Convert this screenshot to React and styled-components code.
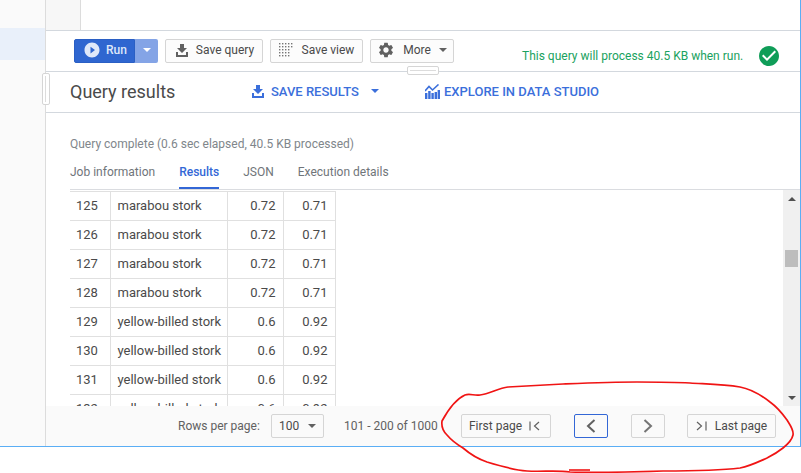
import React from "react";
import styled, { createGlobalStyle } from "styled-components";
import { MdPlayCircleFilled, MdSettings, MdCheckCircle } from "react-icons/md";

const rows = [
  { id: 125, name: "marabou stork", a: "0.72", b: "0.71" },
  { id: 126, name: "marabou stork", a: "0.72", b: "0.71" },
  { id: 127, name: "marabou stork", a: "0.72", b: "0.71" },
  { id: 128, name: "marabou stork", a: "0.72", b: "0.71" },
  { id: 129, name: "yellow-billed stork", a: "0.6", b: "0.92" },
  { id: 130, name: "yellow-billed stork", a: "0.6", b: "0.92" },
  { id: 131, name: "yellow-billed stork", a: "0.6", b: "0.92" },
  { id: 132, name: "yellow-billed stork", a: "0.6", b: "0.92" },
];

const tabs = ["Job information", "Results", "JSON", "Execution details"];

const App = () => {
  return (
    <Page>
      <GlobalStyle />
      <Frame>
        <Sidebar>
          <SidebarHighlight />
        </Sidebar>
        <Main>
          <EditorArea>
            <Gutter />
          </EditorArea>
          <Toolbar>
            <RunGroup>
              <RunButton>
                <MdPlayCircleFilled size={18} />
                Run
              </RunButton>
              <RunCaret>
                <Caret $color="#fff" />
              </RunCaret>
            </RunGroup>
            <ToolButton $width={98} $shift={2}>
              <SaveIcon color="#616161" />
              Save query
            </ToolButton>
            <ToolButton $width={93}>
              <DotsIcon />
              Save view
            </ToolButton>
            <ToolButton $width={84}>
              <MdSettings size={18} color="#616161" />
              More
              <Caret $color="#616161" />
            </ToolButton>
            <Validator>
              This query will process 40.5 KB when run.
              <MdCheckCircle size={24} color="#0f9d58" />
            </Validator>
            <HorizontalHandle />
          </Toolbar>
          <ResultsHeader>
            <VerticalHandle />
            <ResultsTitle>Query results</ResultsTitle>
            <HeaderAction $left={52} $gap={7}>
              <SaveIcon color="#3b6fdb" />
              SAVE RESULTS
              <Caret $color="#3b6fdb" $gap={5} />
            </HeaderAction>
            <HeaderAction $left={46} $gap={4}>
              <ExploreIcon />
              EXPLORE IN DATA STUDIO
            </HeaderAction>
          </ResultsHeader>
          <Summary>Query complete (0.6 sec elapsed, 40.5 KB processed)</Summary>
          <TabBar>
            {tabs.map((tab) => (
              <Tab key={tab} $active={tab === "Results"}>
                {tab}
              </Tab>
            ))}
          </TabBar>
          <TableArea>
            <TableClip>
              <ResultTable>
                <tbody>
                  {rows.map((row) => (
                    <tr key={row.id}>
                      <IdCell>{row.id}</IdCell>
                      <NameCell>{row.name}</NameCell>
                      <NumCell $width={56}>{row.a}</NumCell>
                      <NumCell $width={52}>{row.b}</NumCell>
                    </tr>
                  ))}
                </tbody>
              </ResultTable>
            </TableClip>
            <Scrollbar>
              <ScrollArrow $up />
              <ScrollThumb />
              <ScrollArrow />
            </Scrollbar>
          </TableArea>
          <Footer>
            <FooterLabel>Rows per page:</FooterLabel>
            <PageSize>
              100
              <Caret $color="#616161" />
            </PageSize>
            <PageCount>101 - 200 of 1000</PageCount>
            <PagerButton $width={90} $gap={7} $trim={3}>
              First page
              <EdgeIcon $flip />
            </PagerButton>
            <PagerButton $width={34} $gap={0} $focus $left={23}>
              <ChevronIcon $left $color="#616161" />
            </PagerButton>
            <PagerButton $width={34} $gap={0} $left={23}>
              <ChevronIcon $color="#757575" />
            </PagerButton>
            <PagerButton $width={89} $gap={8} $left={22}>
              <EdgeIcon />
              Last page
            </PagerButton>
          </Footer>
        </Main>
      </Frame>
      <Scribble viewBox="0 0 801 473">
        <path
          d="M508 387 C498 388 490 394 480 395 C474 396 470 393 465 395 C456 399 448 410 442 421 C441 428 444 432 447 435 C452 441 458 445 463 448 C470 454 478 459 487 462 C500 466 514 470 527 471 C542 472 556 470 570 472 C600 473 632 472 663 471 C690 471 716 471 740 468 C750 466 758 462 767 458 C773 455 778 452 783 448 C788 444 792 440 793 435 C794 430 790 425 787 420 C782 413 777 407 770 402 C761 395 751 389 740 387 C723 384 707 384 690 383 C672 382 654 382 637 382 C612 382 588 383 563 384 C544 385 526 386 508 387 Z"
          fill="none"
          stroke="#f01414"
          strokeWidth="1.7"
        />
        <path d="M569 470 L590 470" stroke="#f01414" strokeWidth="1.6" />
      </Scribble>
    </Page>
  );
};

const SaveIcon = ({ color }) => (
  <svg width="12" height="13" viewBox="0 0 12 13" fill={color}>
    <path d="M4 0 H8 V4 H11 L6 9 L1 4 H4 Z" />
    <path d="M0 8 H2 V11 H10 V8 H12 V13 H0 Z" />
  </svg>
);

const DotsIcon = () => (
  <svg width="15" height="15" viewBox="0 0 15 15" fill="#757575">
    {[0, 3, 6, 9, 12].map((y) =>
      [0, 3, 6, 9, 12].map((x) => {
        if (y > 3 && x === 12) return null;
        return <rect key={`${x}-${y}`} x={x} y={y} width="1.4" height="1.4" />;
      })
    )}
  </svg>
);

const ExploreIcon = () => (
  <svg width="15" height="15" viewBox="0 0 15 15" fill="#3b6fdb">
    <rect x="0" y="9" width="2.4" height="6" />
    <rect x="3.2" y="7" width="2.4" height="8" />
    <rect x="6.4" y="9" width="2.4" height="6" />
    <rect x="9.6" y="8" width="2.4" height="7" />
    <rect x="12.6" y="6" width="2.4" height="9" />
    <path d="M0 7 L4 2.5 L7.5 6 L13.5 0.5" fill="none" stroke="#3b6fdb" strokeWidth="1.6" />
  </svg>
);

const EdgeIcon = ({ $flip }) => (
  <svg width="11" height="10" viewBox="0 0 11 10" fill="none" stroke="#616161" strokeWidth="1.2">
    {$flip ? (
      <>
        <path d="M1 0.5 V9.5" />
        <path d="M10 1 L5.5 5 L10 9" />
      </>
    ) : (
      <>
        <path d="M10 0.5 V9.5" />
        <path d="M1 1 L5.5 5 L1 9" />
      </>
    )}
  </svg>
);

const ChevronIcon = ({ $left, $color }) => (
  <svg width="10" height="14" viewBox="0 0 10 14" fill="none" stroke={$color} strokeWidth="2">
    <path d={$left ? "M8.5 1 L2 7 L8.5 13" : "M1.5 1 L8 7 L1.5 13"} />
  </svg>
);

const GlobalStyle = createGlobalStyle`
  html, body {
    margin: 0;
    padding: 0;
    background: #fff;
  }
  body {
    font-family: Roboto, "Liberation Sans", sans-serif;
    color: #3c4043;
  }
`;

const Page = styled.div`
  position: relative;
  width: 801px;
  height: 473px;
  overflow: hidden;
  background: #fff;
`;

const Frame = styled.div`
  display: flex;
  width: 801px;
  height: 447px;
  box-sizing: border-box;
  border-right: 1px solid #5aaef5;
  border-bottom: 1px solid #5aaef5;
`;

const Sidebar = styled.div`
  width: 45px;
  flex: none;
  padding-top: 28px;
  background: #fafafa;
  border-right: 1px solid #dcdcdc;
`;

const SidebarHighlight = styled.div`
  height: 32px;
  background: #e9f0fa;
`;

const Main = styled.div`
  flex: 1;
  min-width: 0;
  display: flex;
  flex-direction: column;
`;

const EditorArea = styled.div`
  height: 31px;
  flex: none;
  box-sizing: border-box;
  background: #fff;
  border-bottom: 1px solid #d3d8de;
`;

const Gutter = styled.div`
  width: 35px;
  height: 100%;
  box-sizing: border-box;
  background: #f7f7f7;
  border-right: 1px solid #dcdcdc;
`;

const Toolbar = styled.div`
  position: relative;
  height: 41px;
  flex: none;
  display: flex;
  align-items: center;
  padding-left: 28px;
  box-sizing: border-box;
  border-bottom: 1px solid #d3d8de;
`;

const RunGroup = styled.div`
  display: flex;
  height: 24px;
  margin-right: 7px;
`;

const RunButton = styled.div`
  width: 61px;
  display: flex;
  align-items: center;
  gap: 5px;
  padding: 0 0 2px 8px;
  box-sizing: border-box;
  background: #2f66d0;
  border: 1px solid #2a5fc4;
  border-radius: 2px 0 0 2px;
  color: #dfe8f9;
  font-size: 12px;
  font-weight: 500;
`;

const RunCaret = styled.div`
  width: 23px;
  display: flex;
  align-items: center;
  justify-content: center;
  padding-bottom: 2px;
  box-sizing: border-box;
  background: #84a4e6;
  border-radius: 0 2px 2px 0;
`;

const Caret = styled.span`
  display: inline-block;
  width: 0;
  height: 0;
  margin-left: ${(p) => p.$gap || 0}px;
  border-left: 4px solid transparent;
  border-right: 4px solid transparent;
  border-top: 4px solid ${(p) => p.$color};
`;

const ToolButton = styled.div`
  width: ${(p) => p.$width}px;
  height: 24px;
  display: flex;
  align-items: center;
  justify-content: center;
  gap: 8px;
  margin-right: 7px;
  padding: 0 0 2px ${(p) => p.$shift || 0}px;
  box-sizing: border-box;
  background: #fcfcfc;
  border: 1px solid #d5d5d5;
  border-radius: 2px;
  color: #4a4a4a;
  font-size: 12px;
`;

const Validator = styled.div`
  display: flex;
  align-items: center;
  gap: 14px;
  margin-left: 61px;
  padding-top: 10px;
  color: #1aa260;
  font-size: 12px;
  white-space: nowrap;
`;

const HorizontalHandle = styled.div`
  position: absolute;
  left: 361px;
  bottom: -4px;
  width: 32px;
  height: 9px;
  box-sizing: border-box;
  background: #fff;
  border: 1px solid #d5d5d5;
  border-radius: 2px;
  &::after {
    content: "";
    display: block;
    height: 1px;
    margin: 3px 2px 0;
    background: #dcdcdc;
  }
`;

const ResultsHeader = styled.div`
  position: relative;
  height: 41px;
  flex: none;
  display: flex;
  align-items: center;
  padding: 0 0 2px 24px;
  box-sizing: border-box;
  border-bottom: 1px solid #d3d8de;
`;

const VerticalHandle = styled.div`
  position: absolute;
  left: -4px;
  top: 1px;
  width: 8px;
  height: 32px;
  box-sizing: border-box;
  background: #fff;
  border: 1px solid #d5d5d5;
  border-radius: 2px;
  &::after {
    content: "";
    display: block;
    width: 1px;
    height: 26px;
    margin: 2px 0 0 2px;
    background: #dcdcdc;
  }
`;

const ResultsTitle = styled.div`
  width: 130px;
  font-size: 18px;
  color: #4a4a4a;
`;

const HeaderAction = styled.div`
  display: flex;
  align-items: center;
  gap: ${(p) => p.$gap}px;
  margin-left: ${(p) => p.$left}px;
  color: #3b6fdb;
  font-size: 13px;
  font-weight: 500;
  white-space: nowrap;
`;

const Summary = styled.div`
  height: 47px;
  flex: none;
  box-sizing: border-box;
  padding: 24px 0 0 24px;
  color: #80868b;
  font-size: 12px;
`;

const TabBar = styled.div`
  height: 30px;
  flex: none;
  display: flex;
  gap: 24px;
  margin-left: 24px;
  box-sizing: border-box;
  border-bottom: 1px solid #dadce0;
`;

const Tab = styled.div`
  height: 29px;
  box-sizing: border-box;
  padding-top: 5px;
  color: ${(p) => (p.$active ? "#3367d6" : "#70757a")};
  border-bottom: 2px solid ${(p) => (p.$active ? "#3367d6" : "transparent")};
  font-size: 12px;
  font-weight: ${(p) => (p.$active ? 500 : 400)};
`;

const TableArea = styled.div`
  flex: 1;
  min-height: 0;
  display: flex;
`;

const TableClip = styled.div`
  flex: 1;
  min-width: 0;
  overflow: hidden;
  padding: 1px 0 0 24px;
`;

const ResultTable = styled.table`
  border-collapse: collapse;
  table-layout: fixed;
  width: 265px;
  font-size: 13px;
  color: #4a4a4a;
  border-top: 1px solid #e0e0e0;
`;

const Cell = styled.td`
  height: 29px;
  padding: 0 6px 2px;
  box-sizing: border-box;
  border-bottom: 1px solid #e0e0e0;
  white-space: nowrap;
`;

const IdCell = styled(Cell)`
  width: 40px;
`;

const NameCell = styled(Cell)`
  width: 117px;
  padding-left: 7px;
  border-left: 1px solid #e0e0e0;
`;

const NumCell = styled(Cell)`
  width: ${(p) => p.$width}px;
  padding-right: 7px;
  text-align: right;
  border-left: 1px solid #e0e0e0;
  &:last-child {
    border-right: 1px solid #e0e0e0;
  }
`;

const Scrollbar = styled.div`
  width: 17px;
  flex: none;
  display: flex;
  flex-direction: column;
  align-items: center;
  padding: 7px 0 6px;
  box-sizing: border-box;
  background: #f0f0f0;
`;

const ScrollArrow = styled.span`
  width: 0;
  height: 0;
  border-left: 4px solid transparent;
  border-right: 4px solid transparent;
  ${(p) => (p.$up ? "border-bottom: 4px solid #505050;" : "border-top: 4px solid #505050; margin-top: auto;")}
`;

const ScrollThumb = styled.div`
  width: 13px;
  height: 17px;
  margin-top: 49px;
  background: #bdbdbd;
`;

const Footer = styled.div`
  position: relative;
  height: 40px;
  flex: none;
  display: flex;
  align-items: center;
  padding-left: 132px;
  background: #fafafa;
  font-size: 12px;
  color: #616161;
`;

const FooterLabel = styled.span`
  width: 93px;
  white-space: nowrap;
`;

const PageSize = styled.div`
  width: 53px;
  height: 24px;
  display: flex;
  align-items: center;
  justify-content: space-between;
  padding: 0 7px;
  box-sizing: border-box;
  border: 1px solid #d5d5d5;
  border-radius: 2px;
  color: #4a4a4a;
`;

const PageCount = styled.span`
  width: 112px;
  margin-left: 20px;
  white-space: nowrap;
`;

const PagerButton = styled.div`
  width: ${(p) => p.$width}px;
  height: 24px;
  flex: none;
  display: flex;
  align-items: center;
  justify-content: center;
  gap: ${(p) => p.$gap}px;
  margin-left: ${(p) => p.$left || 5}px;
  padding-right: ${(p) => p.$trim || 0}px;
  box-sizing: border-box;
  border: 1px solid ${(p) => (p.$focus ? "#3367d6" : "#d5d5d5")};
  border-radius: 2px;
  color: #4a4a4a;
  white-space: nowrap;
`;

const Scribble = styled.svg`
  position: absolute;
  inset: 0;
  width: 801px;
  height: 473px;
  pointer-events: none;
`;

export default App;
